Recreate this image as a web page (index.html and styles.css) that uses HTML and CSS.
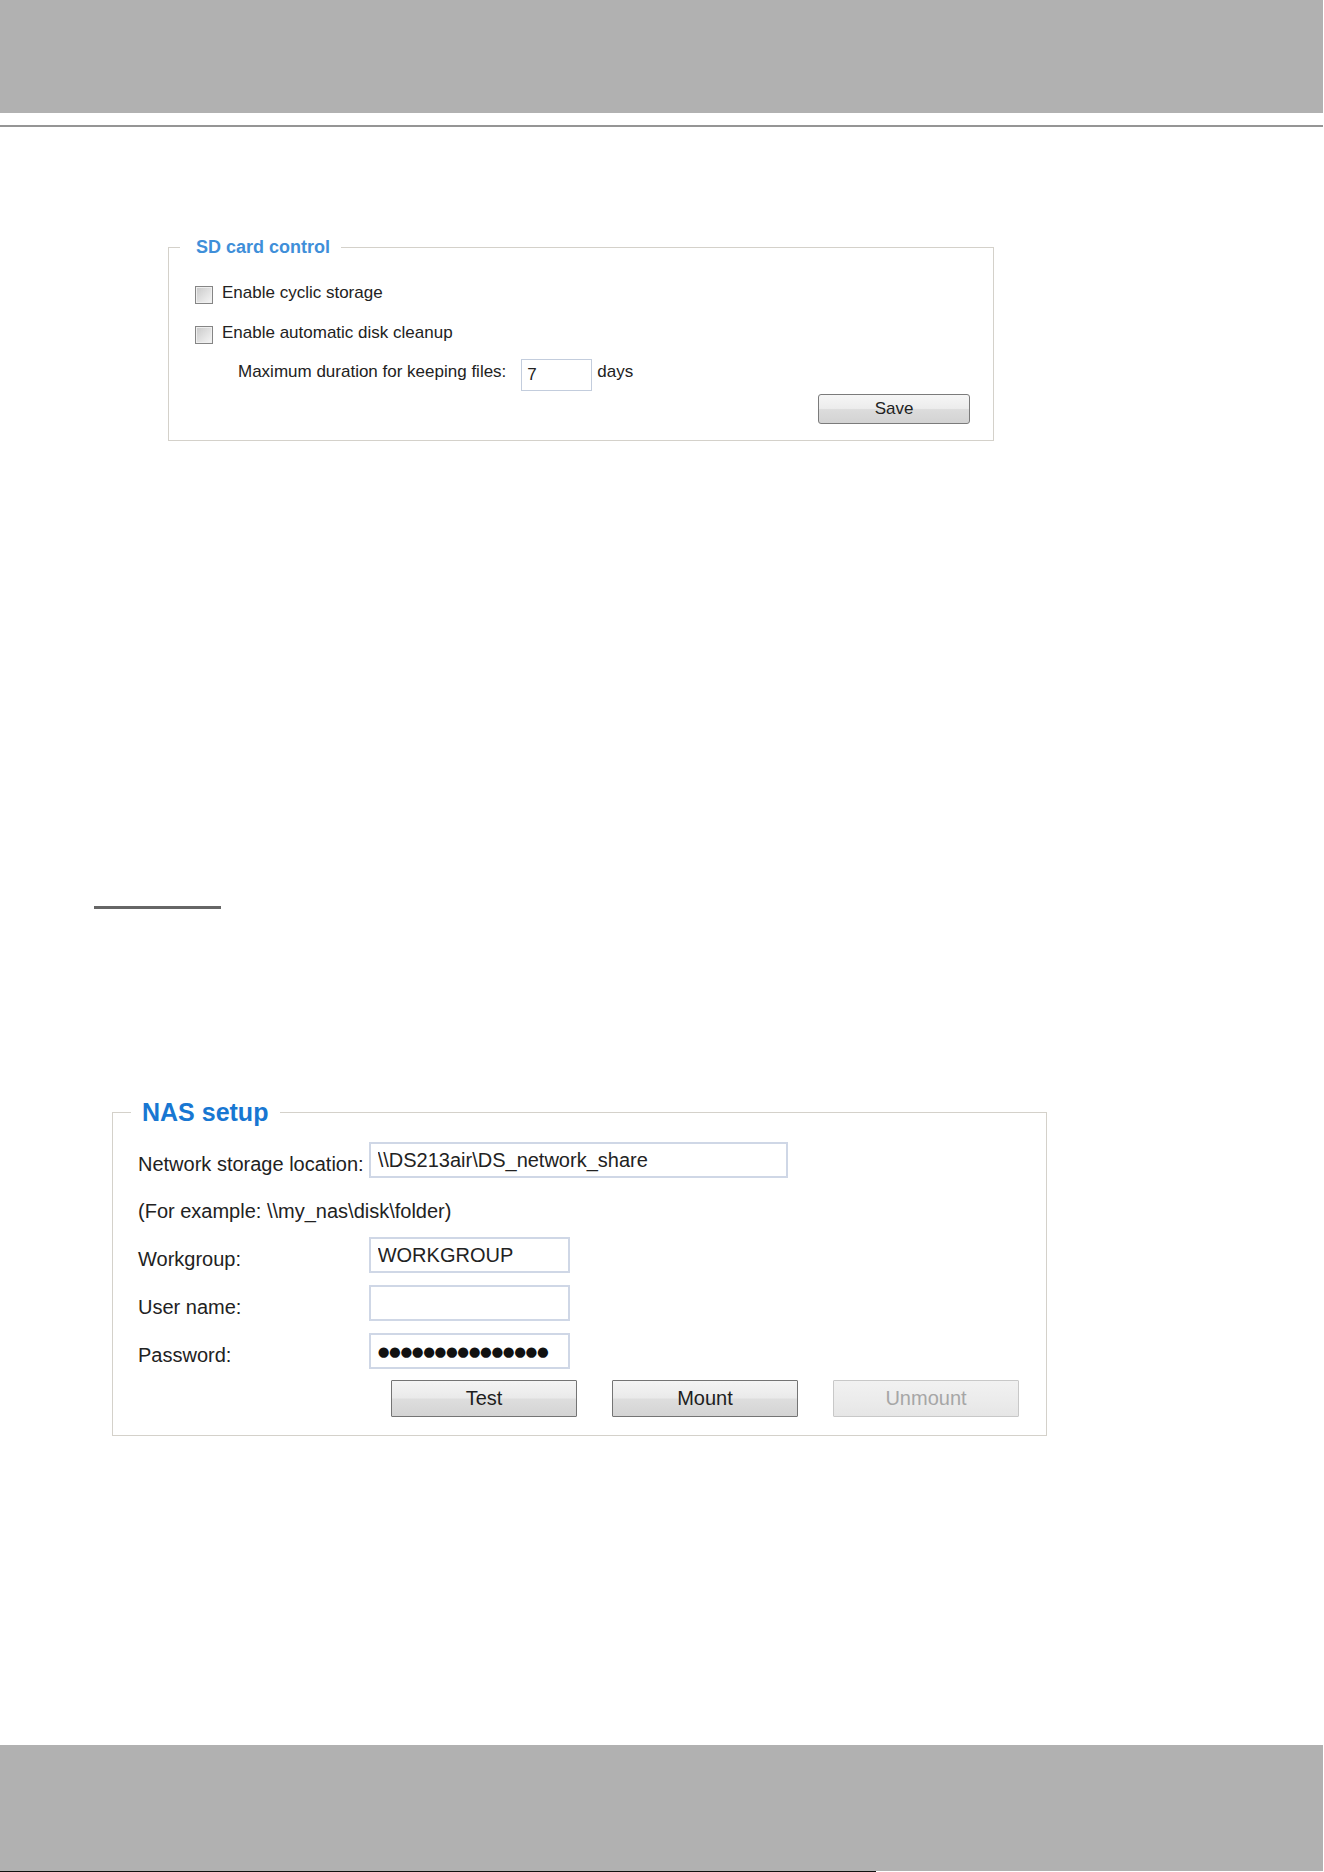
FILE: index.html
```html
<!DOCTYPE html>
<html lang="en">
<head>
<meta charset="utf-8">
<title>SD card control / NAS setup</title>
<link rel="stylesheet" href="styles.css">
</head>
<body>
<header class="topbar"></header>
<div class="rule"></div>
<main class="page">
  <fieldset class="panel panel-sd">
    <legend class="legend legend-sd">SD card control</legend>
    <div class="sd-body">
      <label class="check-row"><input type="checkbox" class="check"><span>Enable cyclic storage</span></label>
      <label class="check-row check-row-2"><input type="checkbox" class="check"><span>Enable automatic disk cleanup</span></label>
      <div class="duration-row">
        <span class="duration-label">Maximum duration for keeping files:</span>
        <input type="text" class="field field-days" value="7">
        <span class="unit">days</span>
      </div>
      <div class="sd-actions"><button type="button" class="btn-save">Save</button></div>
    </div>
  </fieldset>

  <div class="section-bar"></div>

  <fieldset class="panel panel-nas">
    <legend class="legend legend-nas">NAS setup</legend>
    <div class="nas-body">
      <div class="nas-grid">
        <span class="nas-label">Network storage location:</span>
        <input type="text" class="field field-nas field-wide" value="\\DS213air\DS_network_share">
        <span class="nas-label nas-example">(For example: \\my_nas\disk\folder)</span>
        <span class="nas-label">Workgroup:</span>
        <input type="text" class="field field-nas" value="WORKGROUP">
        <span class="nas-label">User name:</span>
        <input type="text" class="field field-nas" value="">
        <span class="nas-label">Password:</span>
        <input type="text" class="field field-nas field-pw" value="●●●●●●●●●●●●●●●" readonly>
      </div>
      <div class="nas-actions">
        <button type="button" class="nas-btn">Test</button>
        <button type="button" class="nas-btn">Mount</button>
        <button type="button" class="nas-btn" disabled>Unmount</button>
      </div>
    </div>
  </fieldset>
</main>
<footer class="bottombar"></footer>
<div class="footer-edge"></div>
</body>
</html>
```

FILE: styles.css
```css
html, body {
  margin: 0;
  padding: 0;
  background: #ffffff;
}

body {
  font-family: "Liberation Sans", Arial, sans-serif;
  color: #262626;
  overflow: hidden;
}

.topbar {
  width: 1323px;
  height: 113px;
  background: #b1b1b1;
}

.rule {
  width: 1323px;
  height: 2px;
  margin-top: 12px;
  background: #959595;
}

.page {
  display: block;
}

.panel {
  margin: 0;
  padding: 0;
  min-width: 0;
  box-sizing: border-box;
  border: 1px solid #d4d1ca;
}

.legend {
  font-family: "Liberation Sans", Arial, sans-serif;
  font-weight: bold;
}

/* ---------- SD card control ---------- */
.panel-sd {
  width: 826px;
  margin: 110px 0 0 168px;
}

.legend-sd {
  margin-left: 11px;
  padding: 0 11px 0 16px;
  font-size: 18px;
  line-height: 20px;
  color: #3f8fd9;
}

.sd-body {
  padding: 26px 23px 16px 26px;
  font-size: 17px;
  line-height: 20px;
  color: #222;
}

.check-row {
  display: flex;
  align-items: center;
  height: 20px;
}

.check-row-2 {
  margin-top: 20px;
}

.check {
  appearance: none;
  -webkit-appearance: none;
  box-sizing: border-box;
  width: 18px;
  height: 18px;
  margin: 3px 9px 0 0;
  border: 1px solid #858585;
  background: linear-gradient(135deg, #c8c8c8 0%, #e2e2e2 55%, #f5f5f5 100%);
  box-shadow: inset 0 0 0 1px #efefef;
}

.duration-row {
  display: flex;
  align-items: center;
  margin-top: 16px;
  padding-left: 43px;
}

.duration-label {
  margin: 0 15px 6px 0;
}

.field {
  box-sizing: border-box;
  margin: 0;
  font-family: "Liberation Sans", Arial, sans-serif;
  color: #222;
  background: #fff;
  outline: none;
}

.field-days {
  width: 71px;
  height: 32px;
  padding: 0 5px;
  font-size: 17px;
  border: 1px solid #c3cddd;
}

.unit {
  margin: 0 0 6px 5px;
}

.sd-actions {
  display: flex;
  justify-content: flex-end;
  margin-top: 3px;
}

.btn-save {
  width: 152px;
  height: 30px;
  padding: 0;
  font-family: "Liberation Sans", Arial, sans-serif;
  font-size: 17px;
  color: #222;
  border: 1px solid #7b7b7b;
  border-radius: 3px;
  background: linear-gradient(#f6f6f6 0%, #ececec 48%, #dcdcdc 52%, #d3d3d3 100%);
}

/* ---------- divider ---------- */
.section-bar {
  width: 127px;
  height: 3px;
  margin: 465px 0 0 94px;
  background: #666666;
}

/* ---------- NAS setup ---------- */
.panel-nas {
  width: 935px;
  margin: 189px 0 0 112px;
}

.legend-nas {
  margin-left: 18px;
  padding: 0 12px 0 11px;
  font-size: 25px;
  line-height: 28px;
  color: #1877d2;
}

.nas-body {
  padding: 16px 0 18px 25px;
  font-size: 20px;
  line-height: 24px;
}

.nas-grid {
  display: grid;
  grid-template-columns: max-content max-content;
  grid-template-rows: 36px 35px 36px 36px 36px;
  row-gap: 12px;
  column-gap: 5px;
}

.nas-label {
  align-self: end;
  margin-bottom: 2px;
  color: #222;
}

.nas-example {
  grid-column: 1 / -1;
}

.field-nas {
  justify-self: start;
  width: 201px;
  height: 36px;
  padding: 0 7px;
  font-size: 20px;
  border: 2px solid #cfd7e6;
}

.field-wide {
  width: 419px;
}

.field-pw {
  padding-left: 7px;
  font-family: "DejaVu Sans", sans-serif;
  font-size: 13.5px;
  letter-spacing: -0.4px;
  color: #111;
}

.nas-actions {
  display: flex;
  gap: 35px;
  margin: 11px 0 0 253px;
}

.nas-btn {
  width: 186px;
  height: 37px;
  padding: 0;
  font-family: "Liberation Sans", Arial, sans-serif;
  font-size: 20px;
  color: #1e1e1e;
  border: 1px solid #747474;
  border-radius: 1px;
  background: linear-gradient(#f4f4f4 0%, #eaeaea 48%, #dddddd 52%, #d4d4d4 100%);
}

.nas-btn:disabled {
  color: #a6a6a6;
  border-color: #c8c8c8;
  background: linear-gradient(#f1f1f1 0%, #ececec 50%, #e6e6e6 100%);
}

/* ---------- footer ---------- */
.bottombar {
  width: 1323px;
  height: 126px;
  margin-top: 309px;
  background: #b1b1b1;
}

.footer-edge {
  width: 876px;
  height: 1px;
  background: #111;
}
```
